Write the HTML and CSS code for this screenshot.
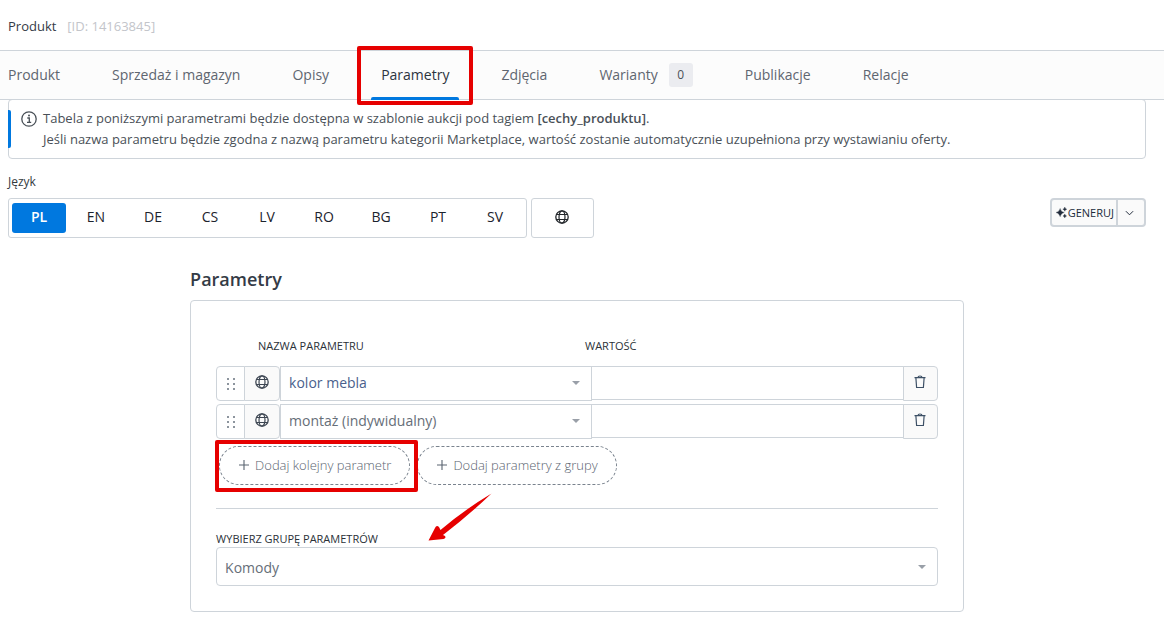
FILE: index.html
```html
<!DOCTYPE html>
<html lang="pl">
<head>
<meta charset="utf-8">
<title>Produkt – Parametry</title>
<link rel="stylesheet" href="styles.css">
</head>
<body>
<svg class="sprite" aria-hidden="true">
  <symbol id="globe" viewBox="0 0 14 14">
    <g fill="none" stroke="currentColor">
      <circle cx="7" cy="7" r="6.2" stroke-width="1.3"/>
      <ellipse cx="7" cy="7" rx="3" ry="6.2" stroke-width="1.2"/>
      <path d="M1.300 4.500h11.400M1.300 9.500h11.400" stroke-width="1.2"/>
    </g>
  </symbol>
  <symbol id="trash" viewBox="0 0 14 14">
    <path d="M1.500 2.600h11M2.900 3l.7 9.500h6.800l.7-9.500M5 2.500c0-2 4-2 4 0" fill="none" stroke="currentColor" stroke-width="1.2"/>
  </symbol>
  <symbol id="grip" viewBox="0 0 8 14">
    <path d="M0 1h2v2H0zM6 1h2v2H6zM0 6h2v2H0zM6 6h2v2H6zM0 11h2v2H0zM6 11h2v2H6z" fill="currentColor"/>
  </symbol>
  <symbol id="plus" viewBox="0 0 12 12">
    <path d="M6 1v10M1 6h10" stroke="currentColor" stroke-width="1.1"/>
  </symbol>
</svg>

<header class="page-header">
  <span class="page-title">Produkt</span>
  <span class="page-id">[ID: 14163845]</span>
</header>

<nav class="tabs">
  <a class="tab" href="#produkt">Produkt</a>
  <a class="tab" href="#magazyn">Sprzedaż i magazyn</a>
  <a class="tab" href="#opisy">Opisy</a>
  <a class="tab tab-active" href="#parametry" aria-current="page">Parametry</a>
  <a class="tab" href="#zdjecia">Zdjęcia</a>
  <a class="tab" href="#warianty">Warianty <span class="badge">0</span></a>
  <a class="tab" href="#publikacje">Publikacje</a>
  <a class="tab" href="#relacje">Relacje</a>
</nav>

<main class="content">
  <section class="notice">
    <svg class="notice-icon" viewBox="0 0 16 16" aria-hidden="true">
      <circle cx="8" cy="8" r="7.2" fill="none" stroke="currentColor" stroke-width="1.3"/>
      <path d="M6.3 7h2v4.2M6 11.4h4.2" fill="none" stroke="currentColor" stroke-width="1.3"/>
      <circle cx="8" cy="4.6" r="1" fill="currentColor"/>
    </svg>
    <p class="notice-text">Tabela z poniższymi parametrami będzie dostępna w szablonie aukcji pod tagiem <b>[cechy_produktu]</b>.<br>Jeśli nazwa parametru będzie zgodna z nazwą parametru kategorii Marketplace, wartość zostanie automatycznie uzupełniona przy wystawianiu oferty.</p>
  </section>

  <p class="lang-label" id="lang-label">Język</p>
  <div class="toolbar">
    <div class="langs" role="group" aria-labelledby="lang-label">
      <button class="lang lang-active" type="button">PL</button>
      <button class="lang" type="button">EN</button>
      <button class="lang" type="button">DE</button>
      <button class="lang" type="button">CS</button>
      <button class="lang" type="button">LV</button>
      <button class="lang" type="button">RO</button>
      <button class="lang" type="button">BG</button>
      <button class="lang" type="button">PT</button>
      <button class="lang" type="button">SV</button>
    </div>
    <button class="lang-all" type="button" aria-label="Wszystkie języki"><svg class="icon"><use href="#globe"/></svg></button>
    <div class="generate">
      <button class="generate-main" type="button">
        <svg class="sparkle" viewBox="0 0 12 12" aria-hidden="true"><path d="M4.500 1.500Q5.300 5.200 9 6Q5.300 6.900 4.500 10.600Q3.700 6.900 0 6Q3.700 5.200 4.500 1.500zM9.600 0q.3 1.900 2.200 2.400q-1.900.4-2.200 2.300q-.3-1.900-2.200-2.300q1.900-.5 2.200-2.400zM9.600 7.600q.3 1.700 2 2.200q-1.700.4-2 2.100q-.3-1.700-2-2.100q1.700-.5 2-2.200z" fill="currentColor" stroke="currentColor" stroke-width="0.3"/></svg>GENERUJ
      </button>
      <button class="generate-more" type="button" aria-label="Więcej opcji"><svg class="chevron" viewBox="0 0 10 6"><path d="M1 1l4 4 4-4" fill="none" stroke="currentColor" stroke-width="1.1"/></svg></button>
    </div>
  </div>

  <section class="params">
    <h2 class="params-title">Parametry</h2>
    <div class="card">
      <div class="columns">
        <span class="column">NAZWA PARAMETRU</span>
        <span class="column">WARTOŚĆ</span>
      </div>
      <div class="row">
        <button class="grip" type="button" aria-label="Przesuń"><svg class="grip-icon"><use href="#grip"/></svg></button>
        <button class="cell-button" type="button" aria-label="Języki"><svg class="icon"><use href="#globe"/></svg></button>
        <div class="select-wrap"><select class="select select-blue" aria-label="Nazwa parametru"><option>kolor mebla</option></select></div>
        <input class="value" type="text" aria-label="Wartość">
        <button class="cell-button cell-last" type="button" aria-label="Usuń"><svg class="icon"><use href="#trash"/></svg></button>
      </div>
      <div class="row">
        <button class="grip" type="button" aria-label="Przesuń"><svg class="grip-icon"><use href="#grip"/></svg></button>
        <button class="cell-button" type="button" aria-label="Języki"><svg class="icon"><use href="#globe"/></svg></button>
        <div class="select-wrap"><select class="select" aria-label="Nazwa parametru"><option>montaż (indywidualny)</option></select></div>
        <input class="value" type="text" aria-label="Wartość">
        <button class="cell-button cell-last" type="button" aria-label="Usuń"><svg class="icon"><use href="#trash"/></svg></button>
      </div>
      <div class="actions">
        <div class="marked"><button class="add" type="button"><svg class="plus"><use href="#plus"/></svg>Dodaj kolejny parametr</button></div>
        <button class="add" type="button"><svg class="plus"><use href="#plus"/></svg>Dodaj parametry z grupy</button>
      </div>
      <div class="group">
        <label class="group-label" for="group">WYBIERZ GRUPĘ PARAMETRÓW</label>
        <div class="select-wrap group-wrap"><select class="select group-select" id="group"><option>Komody</option></select></div>
        <svg class="arrow" viewBox="0 0 66 50" aria-hidden="true"><path d="M63.500 0.500Q36 17 12.500 37L11 34Q8.500 31.500 7 35L0.500 47.500L15.500 46Q18.500 45 17 43L15 42Q41 22 63.500 0.500Z" fill="#e60000"/></svg>
      </div>
    </div>
  </section>
</main>
</body>
</html>
```
FILE: styles.css
```css
* { box-sizing: border-box; }
body {
  margin: 0;
  background: #fff;
  color: #495057;
  font: 14px/20px "Open Sans", sans-serif;
}
button, select, input { margin: 0; padding: 0; font: inherit; color: inherit; border-radius: 0; }
button { display: flex; align-items: center; justify-content: center; border: 0; background: none; cursor: pointer; }
.sprite { display: none; }
.icon { width: 14px; height: 14px; }

.page-header { display: flex; align-items: center; gap: 11px; height: 50px; padding: 2px 8px 0; font-size: 13px; }
.page-title { color: #343a46; }
.page-id { color: #c3c5ca; }

.tabs {
  display: flex;
  gap: 52px;
  height: 50px;
  padding: 0 8px;
  background: #fcfcfc;
  border-top: 1px solid #ced4da;
  border-bottom: 1px solid #ced4da;
}
.tab { position: relative; display: flex; align-items: center; color: #5f6670; text-decoration: none; white-space: nowrap; }
.tab-active { color: #2c3440; }
.tab-active::before { content: ""; position: absolute; z-index: 1; inset: 46px -10px -1px; background: #0078df; border-radius: 2px 2px 0 0; }
.tab-active::after { content: ""; position: absolute; z-index: 2; inset: -5px -24px -6px; border: 4px solid #e60000; border-radius: 2px; }
.badge { width: 24px; margin-left: 11px; background: #ebecf0; border-radius: 3px; color: #495057; font-size: 12px; line-height: 24px; text-align: center; }

.content { padding: 0 18px 7px 8px; }
.notice {
  position: relative;
  display: flex;
  gap: 6px;
  padding: 8px 12px;
  margin-top: -1px;
  border: 1px solid #ced4da;
  border-radius: 4px;
  font-size: 13px;
  line-height: 21px;
}
.notice::before { content: ""; position: absolute; left: -1px; top: 10px; width: 3px; height: 38px; background: #0078df; border-radius: 0 2px 2px 0; }
.notice-icon { flex: none; width: 16px; height: 16px; margin-top: 3px; color: #495057; }
.notice-text { margin: 0; }
.notice-text b { font-weight: 600; }

.lang-label { margin: 13px 0 6px; color: #343a40; font-size: 12px; }
.toolbar { display: flex; align-items: flex-start; gap: 4px; }
.langs { display: flex; gap: 3px; padding: 4px 4px 4px 3px; border: 1px solid #ced4da; border-radius: 3px; }
.lang { width: 54px; height: 30px; padding-bottom: 3px; border-radius: 3px; color: #1c232d; font-weight: 500; font-size: 14px; }
.lang-active { background: #0078df; color: #fff; font-weight: 600; }
.lang-all { width: 63px; height: 40px; padding: 0 2px 2px 0; border: 1px solid #ced4da; border-radius: 3px; color: #212529; }
.generate { display: flex; height: 29px; margin-left: auto; border: 2px solid #ced4da; border-radius: 4px; background: #fafafa; color: #212b3b; }
.generate-main { gap: 1px; padding: 0 2px 0 4px; font-size: 11px; }
.sparkle { width: 11px; height: 11px; }
.generate-more { width: 28px; border-left: 2px solid #ced4da; }
.chevron { width: 9px; height: 6px; margin-right: 3px; }

.params { width: 68%; margin: 29px auto 0; }
.params-title { margin: 0 0 8px; color: #343b46; font-size: 18px; line-height: 25px; font-weight: 600; }
.card { padding: 35px 25px 25px; border: 1px solid #ced4da; border-radius: 4px; }
.columns { display: grid; grid-template-columns: 1fr 1fr; padding-left: 42px; margin-right: 26px; margin-bottom: 10px; color: #2b3138; font-size: 11px; font-weight: 500; }
.row { display: flex; align-items: flex-start; height: 35px; margin-bottom: 3px; }
.grip { width: 29px; height: 35px; border: 1px solid #ced4da; border-radius: 4px 0 0 4px; color: #8d959e; }
.grip-icon { width: 8px; height: 14px; }
.cell-button { width: 36px; height: 35px; margin-left: -1px; padding-bottom: 3px; border: 1px solid #ced4da; border-radius: 0 4px 4px 0; background: #fafafa; color: #3d4652; }
.cell-last { width: 35px; color: #3d5066; }
.select-wrap { position: relative; flex: 1; }
.select-wrap::after { content: ""; position: absolute; right: 12px; top: 15px; border: 4px solid transparent; border-top-color: #999fa8; border-bottom: 0; pointer-events: none; }
.select { display: block; width: 100%; height: 35px; padding: 0 24px 2px 8px; border: 1px solid #ced4da; background: #fff; color: #666e78; appearance: none; }
.select-blue { color: #4a5f8c; }
.value { flex: 1; min-width: 0; height: 34px; margin-left: -1px; border: 1px solid #ced4da; }
.actions { display: flex; gap: 7px; padding: 4px 0 0 3px; }
.marked { position: relative; }
.marked::after { content: ""; position: absolute; inset: -6px -8px -7px -4px; border: 4px solid #e60000; border-radius: 2px; pointer-events: none; }
.add { gap: 5px; height: 39px; padding: 0 18px 1px; border: 1px dashed #7a838e; border-radius: 20px; color: #5a6470; font-size: 13px; font-weight: 300; white-space: nowrap; }
.plus { width: 12px; height: 12px; }
.group { position: relative; margin-top: 23px; padding-top: 21px; border-top: 1px solid #ced4da; }
.group-label { display: block; color: #2b3138; font-size: 11px; line-height: 17px; font-weight: 500; }
.group-wrap::after { top: 18px; }
.group-select { height: 39px; padding-top: 2px; padding-bottom: 0; border-radius: 4px; }
.arrow { position: absolute; left: 212px; top: -16px; width: 66px; height: 50px; pointer-events: none; }
```
